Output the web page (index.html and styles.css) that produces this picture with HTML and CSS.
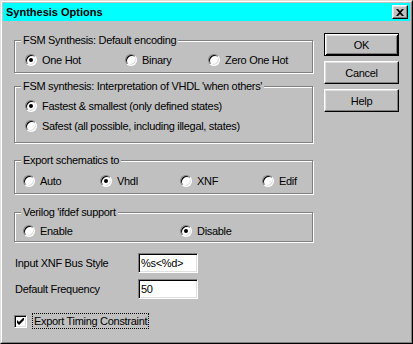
FILE: index.html
```html
<!DOCTYPE html>
<html>
  <head>
    <title>Synthesis Options</title>
    <link rel="stylesheet" href="styles.css">
  </head>
  <body>
    <div class="window">
      <div class="window-inner">
        <div class="titlebar">
          <span class="title">Synthesis Options</span>
          <span class="close">
            <svg width="8" height="7" viewBox="0 0 8 7">
              <path d="M0 0h2l2 2 2-2h2L5 3.5 8 7H6L4 5 2 7H0l3-3.5z" fill="#000"/>
            </svg>
          </span>
        </div>

        <div class="content">
          <div class="left">
            <div class="group g1">
              <div class="legend">FSM Synthesis: Default encoding</div>
              <div class="opts">
                <div class="opt"><span class="radio on"></span>One Hot</div>
                <div class="opt"><span class="radio"></span>Binary</div>
                <div class="opt"><span class="radio"></span>Zero One Hot</div>
              </div>
            </div>

            <div class="group g2">
              <div class="legend">FSM synthesis: Interpretation of VHDL 'when others'</div>
              <div class="opts">
                <div class="opt"><span class="radio on"></span>Fastest &amp; smallest (only defined states)</div>
                <div class="opt"><span class="radio"></span>Safest (all possible, including illegal, states)</div>
              </div>
            </div>

            <div class="group g3">
              <div class="legend">Export schematics to</div>
              <div class="opts">
                <div class="opt"><span class="radio"></span>Auto</div>
                <div class="opt"><span class="radio on"></span>Vhdl</div>
                <div class="opt"><span class="radio"></span>XNF</div>
                <div class="opt"><span class="radio"></span>Edif</div>
              </div>
            </div>

            <div class="group g4">
              <div class="legend">Verilog 'ifdef support</div>
              <div class="opts">
                <div class="opt"><span class="radio"></span>Enable</div>
                <div class="opt"><span class="radio on"></span>Disable</div>
              </div>
            </div>

            <div class="row first">
              <span class="row-label">Input XNF Bus Style</span>
              <span class="field">%s&lt;%d&gt;</span>
            </div>
            <div class="row">
              <span class="row-label">Default Frequency</span>
              <span class="field">50</span>
            </div>

            <div class="checkrow">
              <span class="check">
                <svg width="7" height="7" viewBox="0 0 7 7">
                  <path d="M0 2l2 2 5-5v3L2 7 0 5z" fill="#000"/>
                </svg>
              </span>
              <span class="focus">Export Timing Constraint</span>
            </div>
          </div>

          <div class="buttons">
            <div class="btn default">OK</div>
            <div class="btn">Cancel</div>
            <div class="btn">Help</div>
          </div>
        </div>
      </div>
    </div>
  </body>
</html>
```

FILE: styles.css
```css
body {
  margin: 0;
  font-family: "Liberation Sans", Arial, sans-serif;
  font-size: 11px;
  letter-spacing: -0.3px;
  color: #000;
  background: #c0c0c0;
}

.window {
  width: 413px;
  height: 344px;
  box-sizing: border-box;
  background: #c0c0c0;
  border: 1px solid;
  border-color: #dfdfdf #000 #000 #dfdfdf;
}

.window-inner {
  height: 100%;
  box-sizing: border-box;
  border: 1px solid;
  border-color: #fff #808080 #808080 #fff;
  padding: 1px;
}

.titlebar {
  height: 18px;
  background: #00ffff;
  display: flex;
  align-items: center;
  justify-content: space-between;
  padding: 0 2px 0 3px;
}

.title {
  font-weight: bold;
  letter-spacing: 0;
}

.close {
  width: 16px;
  height: 14px;
  box-sizing: border-box;
  background: #c0c0c0;
  border: 1px solid;
  border-color: #fff #000 #000 #fff;
  box-shadow: inset -1px -1px #808080, inset 1px 1px #dfdfdf;
  display: flex;
  align-items: center;
  justify-content: center;
}

.content {
  display: flex;
  padding: 12px 0 0 11px;
}

.left {
  width: 299px;
  padding-top: 7px;
}

/* group boxes */
.group {
  box-sizing: border-box;
  border: 1px solid #808080;
  box-shadow: inset 1px 1px #fff, 1px 1px #fff;
}

.legend {
  display: table;
  height: 13px;
  line-height: 13px;
  margin: -7px 0 0 6px;
  padding: 0 2px;
  background: #c0c0c0;
}

.opts {
  display: grid;
  margin-top: 6px;
  padding-left: 10px;
}

.opt {
  display: flex;
  align-items: center;
  gap: 5px;
  height: 13px;
  white-space: nowrap;
}

.g1 { height: 33px; }
.g1 .opts { grid-template-columns: 100px 83px auto; }

.g2 { height: 57px; margin-top: 13px; }
.g2 .opts { row-gap: 7px; }

.g3 { height: 34px; margin-top: 17px; }
.g3 .opts { grid-template-columns: 77px 80px 82px auto; padding-left: 8px; margin-top: 7px; }

.g4 { height: 30px; margin-top: 18px; }
.g4 .opts { grid-template-columns: 157px auto; padding-left: 8px; margin-top: 5px; }

.radio {
  width: 12px;
  height: 12px;
  flex: none;
  box-sizing: border-box;
  border-radius: 50%;
  background: #fff;
  border: 1px solid;
  border-color: #808080 #fff #fff #808080;
  box-shadow: inset 1px 1px #000, inset -1px -1px #dfdfdf;
  display: flex;
  align-items: center;
  justify-content: center;
}

.radio.on::after {
  content: "";
  width: 4px;
  height: 4px;
  border-radius: 50%;
  background: #000;
}

/* text fields */
.row {
  display: flex;
  align-items: center;
  height: 20px;
  margin-top: 6px;
  padding-left: 1px;
}

.row.first {
  margin-top: 11px;
}

.row-label {
  width: 123px;
}

.field {
  width: 60px;
  height: 20px;
  box-sizing: border-box;
  background: #fff;
  border: 1px solid;
  border-color: #808080 #fff #fff #808080;
  box-shadow: inset 1px 1px #000, inset -1px -1px #dfdfdf;
  padding-left: 2px;
  line-height: 18px;
}

.checkrow {
  display: flex;
  align-items: center;
  margin-top: 14px;
}

.check {
  width: 13px;
  height: 13px;
  box-sizing: border-box;
  background: #fff;
  border: 1px solid;
  border-color: #808080 #fff #fff #808080;
  box-shadow: inset 1px 1px #000, inset -1px -1px #dfdfdf;
  display: flex;
  align-items: center;
  justify-content: center;
}

.focus {
  margin-left: 5px;
  border: 1px dotted #000;
  padding: 0 1px;
  height: 14px;
  line-height: 14px;
}

/* buttons */
.buttons {
  margin-left: 11px;
  display: flex;
  flex-direction: column;
  gap: 5px;
}

.btn {
  width: 75px;
  height: 23px;
  box-sizing: border-box;
  background: #c0c0c0;
  border: 1px solid;
  border-color: #fff #000 #000 #fff;
  box-shadow: inset -1px -1px #808080, inset 1px 1px #dfdfdf;
  display: flex;
  align-items: center;
  justify-content: center;
}

.btn.default {
  border: 1px solid #000;
  box-shadow: inset 1px 1px #fff, inset -1px -1px #000, inset 2px 2px #dfdfdf, inset -2px -2px #808080;
}
```
